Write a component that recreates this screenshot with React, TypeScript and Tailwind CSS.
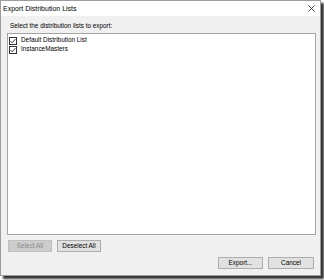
import React from "react";

const font = { fontFamily: '"Liberation Sans", Arial, sans-serif' };

function CheckBox() {
  return (
    <svg width="8" height="8" viewBox="0 0 8 8" className="shrink-0">
      <rect x="0.5" y="0.5" width="7" height="7" fill="#fff" stroke="#333" strokeWidth="1" />
      <path d="M1.6 4.1 L3.2 5.7 L6.4 2.2" fill="none" stroke="#222" strokeWidth="0.9" />
    </svg>
  );
}

function Btn({ label, disabled }: { label: string; disabled?: boolean }) {
  return (
    <div
      className={`h-[12px] flex items-center justify-center border text-[6.4px] leading-none ${
        disabled
          ? "bg-[#cccccc] border-[#bfbfbf] text-[#8a8a8a]"
          : "bg-[#e1e1e1] border-[#adadad] text-black"
      }`}
    >
      {label}
    </div>
  );
}

export default function App() {
  const lists = ["Default Distribution List", "InstanceMasters"];

  return (
    <div className="w-[324px] h-[280px] bg-white" style={font}>
      <div className="w-[321px] h-[276px] flex flex-col border border-[#9c9c9c] bg-[#f0f0f0] shadow-[3px_3px_2px_rgba(0,0,0,0.8)]">
        {/* Title bar */}
        <div className="h-[15px] flex-none bg-white flex items-center justify-between pl-[2px] pr-[5px]">
          <span className="text-[7px] leading-none text-black">Export Distribution Lists</span>
          <svg width="7" height="7" viewBox="0 0 7 7">
            <path d="M0.5 0.5 L6.5 6.5 M6.5 0.5 L0.5 6.5" stroke="#333" strokeWidth="0.9" />
          </svg>
        </div>

        {/* Client area */}
        <div className="flex-1 flex flex-col pl-[6px] pr-[6px]">
          <div className="mt-[6px] h-[8px] flex items-center pl-[3px] text-[6.4px] leading-none text-black">
            Select the distribution lists to export:
          </div>

          <div className="mt-[3px] w-[309px] h-[202px] bg-white border border-[#a3a3a3] pt-[2px] pl-[1px]">
            {lists.map((name) => (
              <div key={name} className="h-[9px] flex items-center gap-[4px]">
                <CheckBox />
                <span className="text-[6.4px] leading-none text-black">{name}</span>
              </div>
            ))}
          </div>

          <div className="mt-[5px] flex gap-[5px] pl-[1px]">
            <div className="w-[44px]">
              <Btn label="Select All" disabled />
            </div>
            <div className="w-[44px]">
              <Btn label="Deselect All" />
            </div>
          </div>

          <div className="mt-[5px] flex justify-end gap-[5px]">
            <div className="w-[45px]">
              <Btn label="Export..." />
            </div>
            <div className="w-[46px]">
              <Btn label="Cancel" />
            </div>
          </div>
        </div>
      </div>
    </div>
  );
}
